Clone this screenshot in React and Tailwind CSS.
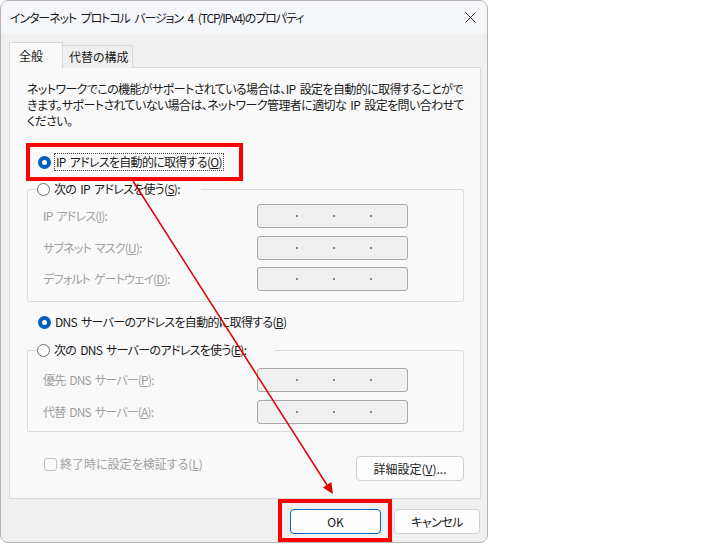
import React from 'react';

const Radio = ({ checked }) =>
  checked ? (
    <span className="w-[13px] h-[13px] rounded-full bg-[#005fb8] flex items-center justify-center shrink-0">
      <span className="w-[5px] h-[5px] rounded-full bg-white" />
    </span>
  ) : (
    <span className="w-[13px] h-[13px] rounded-full border border-[#6e6e6e] bg-white shrink-0" />
  );

const IpField = () => (
  <div className="w-[151px] h-[24px] border border-[#a8a8a8] rounded-[3px] bg-[#f0f0f0] flex items-center pl-[3px]">
    <span className="flex-1" />
    <span className="w-[2px] h-[2px] bg-[#8a8a8a]" />
    <span className="flex-1" />
    <span className="w-[2px] h-[2px] bg-[#8a8a8a]" />
    <span className="flex-1" />
    <span className="w-[2px] h-[2px] bg-[#8a8a8a]" />
    <span className="flex-1" />
  </div>
);

const FieldRow = ({ label, className = '' }) => (
  <div className={`flex items-center h-[24px] ${className}`}>
    <span className="w-[214px] text-[#a0a0a0] tracking-[-0.8px] [word-spacing:2px] whitespace-nowrap">{label}</span>
    <IpField />
  </div>
);

export default function App() {
  return (
    <div className="relative w-[726px] h-[545px] bg-white overflow-hidden font-['Noto_Sans_CJK_JP',sans-serif] text-[12px] text-[#1a1a1a] [font-feature-settings:'palt']">
      <div className="w-[488px] h-[543px] border border-[#b4b4b4] rounded-[8px] bg-[#f0f0f0] flex flex-col overflow-hidden">
        {/* title bar */}
        <div className="h-[33px] shrink-0 bg-[#f5f6fa] flex items-center justify-between pl-[9px] pr-[11px]">
          <span className="tracking-[-1.1px] [word-spacing:3px] whitespace-nowrap">インターネット プロトコル バージョン 4 (TCP/IPv4)のプロパティ</span>
          <svg width="11" height="11" viewBox="0 0 11 11">
            <line x1="0.5" y1="0.5" x2="10.5" y2="10.5" stroke="#2b2b2b" strokeWidth="1" />
            <line x1="10.5" y1="0.5" x2="0.5" y2="10.5" stroke="#2b2b2b" strokeWidth="1" />
          </svg>
        </div>

        {/* tabs */}
        <div className="flex items-end mt-[8px] ml-[8px] relative z-10 -mb-px">
          <div className="w-[54px] h-[26px] border border-b-0 border-[#d9d9d9] bg-[#f9f9f9] flex items-center pl-[9px]">全般</div>
          <div className="w-[70px] h-[23px] border-t border-r border-[#d9d9d9] bg-[#f0f0f0] flex items-center pl-[6px]">代替の構成</div>
        </div>

        {/* panel */}
        <div className="ml-[8px] w-[472px] h-[432px] shrink-0 border border-[#d9d9d9] bg-[#f9f9f9] pl-[17px] flex flex-col">
          <p className="mt-[13px] leading-[16px] tracking-[-0.6px] [word-spacing:2px] whitespace-nowrap">
            ネットワークでこの機能がサポートされている場合は、IP 設定を自動的に取得することがで<br />
            きます。サポートされていない場合は、ネットワーク管理者に適切な IP 設定を問い合わせて<br />
            ください。
          </p>

          <div className="mt-[23px] h-[20px] flex items-center pl-[11px]">
            <Radio checked />
            <span className="ml-[3px] border border-dotted border-[#444] px-[1px] leading-[16px] tracking-[-0.7px] [word-spacing:2px] whitespace-nowrap">
              IP アドレスを自動的に取得する(<u>O</u>)
            </span>
          </div>

          <fieldset className="mt-[7px] w-[437px] border border-[#dcdcdc] rounded-[2px] pl-[15px] pb-[10px]">
            <legend className="-ml-[6px] w-[164px] h-[20px] flex items-center">
              <Radio />
              <span className="ml-[4px] tracking-[-0.7px] [word-spacing:2px] whitespace-nowrap">次の IP アドレスを使う(<u>S</u>):</span>
            </legend>
            <FieldRow className="mt-[5px]" label={<>IP アドレス(<u>I</u>):</>} />
            <FieldRow className="mt-[8px]" label={<>サブネット マスク(<u>U</u>):</>} />
            <FieldRow className="mt-[7px]" label={<>デフォルト ゲートウェイ(<u>D</u>):</>} />
          </fieldset>

          <div className="mt-[10px] h-[20px] flex items-center pl-[11px]">
            <Radio checked />
            <span className="ml-[4px] tracking-[-0.7px] [word-spacing:2px] whitespace-nowrap">DNS サーバーのアドレスを自動的に取得する(<u>B</u>)</span>
          </div>

          <fieldset className="mt-[8px] w-[437px] border border-[#dcdcdc] rounded-[2px] pl-[15px] pb-[7px]">
            <legend className="-ml-[6px] w-[238px] h-[20px] flex items-center">
              <Radio />
              <span className="ml-[4px] tracking-[-0.7px] [word-spacing:2px] whitespace-nowrap">次の DNS サーバーのアドレスを使う(<u>E</u>):</span>
            </legend>
            <FieldRow className="mt-[8px]" label={<>優先 DNS サーバー(<u>P</u>):</>} />
            <FieldRow className="mt-[8px]" label={<>代替 DNS サーバー(<u>A</u>):</>} />
          </fieldset>

          <div className="mt-[24px] w-[437px] flex items-start justify-between">
            <div className="flex items-center h-[14px] mt-[1px] pl-[17px] text-[#a0a0a0]">
              <span className="w-[13px] h-[13px] rounded-[3px] border border-[#c2c2c2] bg-[#fbfbfb]" />
              <span className="ml-[3px] whitespace-nowrap">終了時に設定を検証する(<u>L</u>)</span>
            </div>
            <button className="w-[108px] h-[25px] rounded-[4px] border border-[#d0d0d0] bg-[#fdfdfd]">
              詳細設定(<u>V</u>)...
            </button>
          </div>
        </div>

        {/* dialog buttons */}
        <div className="mt-[10px] flex justify-end gap-[13px] pr-[7px]">
          <button className="w-[91px] h-[25px] rounded-[4px] border border-[#0067c0] bg-[#fdfdfd]">OK</button>
          <button className="w-[86px] h-[25px] rounded-[4px] border border-[#d0d0d0] bg-[#fdfdfd] tracking-[-0.5px]">キャンセル</button>
        </div>
      </div>

      {/* annotations */}
      <div className="absolute left-[26px] top-[143px] w-[217px] h-[38px] border-4 border-[#ff0000]" />
      <div className="absolute left-[278px] top-[499px] w-[114px] h-[43px] border-4 border-[#ff0000]" />
      <svg className="absolute left-0 top-0 pointer-events-none" width="726" height="545" viewBox="0 0 726 545">
        <line x1="133" y1="181" x2="327" y2="485" stroke="#e00000" strokeWidth="1.5" />
        <polygon points="333,494 322.9,487.4 331.3,482" fill="#e00000" />
      </svg>
    </div>
  );
}
